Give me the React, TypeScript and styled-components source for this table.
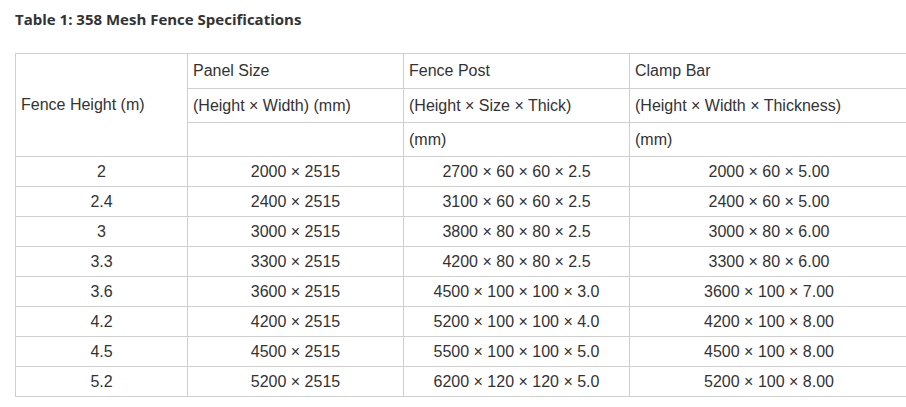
import React from "react";
import styled, { createGlobalStyle } from "styled-components";

const Global = createGlobalStyle`
  html, body { margin: 0; padding: 0; background: #fff; overflow: hidden; }
  body { width: 906px; height: 407px; }
`;

const Page = styled.div`
  padding: 8px 0 0 15px;
  overflow: hidden;
`;

const Title = styled.div`
  font-family: "Open Sans", "Noto Sans", sans-serif;
  font-weight: 700;
  font-size: 15px;
  line-height: 22px;
  color: #333;
  margin: 0 0 23px 0;
`;

const Table = styled.table`
  border-collapse: collapse;
  table-layout: fixed;
  width: 893px;
  font-family: "Liberation Sans", Arial, sans-serif;
  font-size: 16px;
  color: #333;
`;

const HeadCell = styled.td<{ $h?: number }>`
  border: 1px solid #cfcfcf;
  text-align: left;
  padding: 0 5px;
  height: ${(p) => p.$h ?? 33}px;
  vertical-align: middle;
  white-space: nowrap;
`;

const DataCell = styled.td`
  border: 1px solid #cfcfcf;
  text-align: center;
  padding: 0 5px;
  height: 29px;
  vertical-align: middle;
  white-space: nowrap;
`;

const rows: [string, string, string, string][] = [
  ["2", "2000 × 2515", "2700 × 60 × 60 × 2.5", "2000 × 60 × 5.00"],
  ["2.4", "2400 × 2515", "3100 × 60 × 60 × 2.5", "2400 × 60 × 5.00"],
  ["3", "3000 × 2515", "3800 × 80 × 80 × 2.5", "3000 × 80 × 6.00"],
  ["3.3", "3300 × 2515", "4200 × 80 × 80 × 2.5", "3300 × 80 × 6.00"],
  ["3.6", "3600 × 2515", "4500 × 100 × 100 × 3.0", "3600 × 100 × 7.00"],
  ["4.2", "4200 × 2515", "5200 × 100 × 100 × 4.0", "4200 × 100 × 8.00"],
  ["4.5", "4500 × 2515", "5500 × 100 × 100 × 5.0", "4500 × 100 × 8.00"],
  ["5.2", "5200 × 2515", "6200 × 120 × 120 × 5.0", "5200 × 100 × 8.00"],
];

export default function App() {
  return (
    <>
      <Global />
      <Page>
        <Title>Table 1: 358 Mesh Fence Specifications</Title>
        <Table>
          <colgroup>
            <col style={{ width: 172 }} />
            <col style={{ width: 216 }} />
            <col style={{ width: 226 }} />
            <col style={{ width: 279 }} />
          </colgroup>
          <tbody>
            <tr>
              <HeadCell rowSpan={3}>Fence Height (m)</HeadCell>
              <HeadCell $h={34}>Panel Size</HeadCell>
              <HeadCell $h={34}>Fence Post</HeadCell>
              <HeadCell $h={34}>Clamp Bar</HeadCell>
            </tr>
            <tr>
              <HeadCell>(Height × Width) (mm)</HeadCell>
              <HeadCell>(Height × Size × Thick)</HeadCell>
              <HeadCell>(Height × Width × Thickness)</HeadCell>
            </tr>
            <tr>
              <HeadCell></HeadCell>
              <HeadCell>(mm)</HeadCell>
              <HeadCell>(mm)</HeadCell>
            </tr>
            {rows.map((r) => (
              <tr key={r[0]}>
                {r.map((c, i) => (
                  <DataCell key={i}>{c}</DataCell>
                ))}
              </tr>
            ))}
          </tbody>
        </Table>
      </Page>
    </>
  );
}
